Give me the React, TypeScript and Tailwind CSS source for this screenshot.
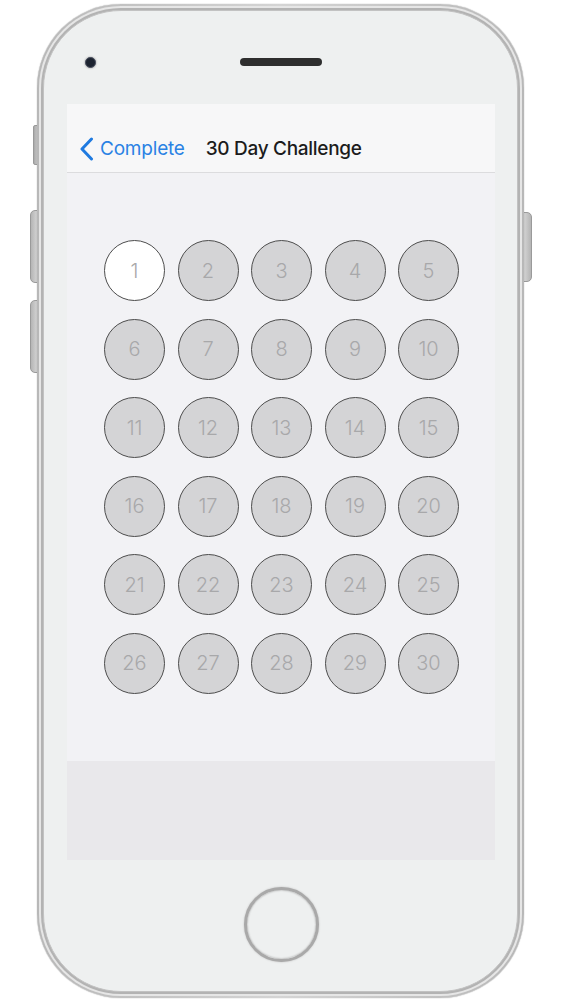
import React from "react";

const days = Array.from({ length: 30 }, (_, i) => i + 1);

export default function App() {
  return (
    <div className="w-[563px] h-[1000px] bg-white relative overflow-hidden" style={{ fontFamily: "Inter, 'Noto Sans', sans-serif" }}>
      {/* side buttons */}
      <div className="absolute left-[33px] top-[125px] w-[6px] h-[40px] rounded-l-[2px] bg-gradient-to-r from-[#a9a9a9] to-[#cfcfcf] border border-[#9a9a9a]" />
      <div className="absolute left-[30px] top-[210px] w-[9px] h-[73px] rounded-l-[5px] bg-gradient-to-r from-[#b5b5b5] to-[#d8d8d8] border border-[#9a9a9a]" />
      <div className="absolute left-[30px] top-[300px] w-[9px] h-[73px] rounded-l-[5px] bg-gradient-to-r from-[#b5b5b5] to-[#d8d8d8] border border-[#9a9a9a]" />
      <div className="absolute left-[522px] top-[212px] w-[10px] h-[70px] rounded-r-[5px] bg-gradient-to-l from-[#b5b5b5] to-[#d8d8d8] border border-[#9a9a9a]" />

      <div className="pl-[37px] pt-[4px] relative">
        {/* phone outer frame */}
        <div className="w-[487px] h-[994px] rounded-[84px] bg-gradient-to-r from-[#b8b8b8] via-[#d4d4d4] to-[#b8b8b8] p-[2px] shadow-[0_0_1px_#888]">
          <div className="w-full h-full rounded-[82px] bg-[#e6e6e6] p-[2px]">
            <div className="w-full h-full rounded-[80px] bg-[#b3b3b3] p-[2px]">
              <div className="w-full h-full rounded-[78px] bg-[#eef0f0] border border-[#c2c2c2] flex flex-col">
                {/* top: camera + speaker */}
                <div className="h-[93px] flex items-center pt-[9px] shrink-0">
                  <div className="ml-[41px] w-[11px] h-[11px] rounded-full bg-[#1c2330] border border-[#4a5060] shadow-[0_0_2px_#888]" />
                  <div className="ml-[144px] w-[82px] h-[8px] rounded-full bg-[#2e2e2e]" />
                </div>
                {/* screen */}
                <div className="ml-[23px] w-[428px] h-[756px] flex flex-col shrink-0">
                  <div className="h-[69px] bg-[#f7f7f8] border-b border-[#dcdcde] flex items-center pt-[22px] shrink-0">
                    <svg width="16" height="24" viewBox="0 0 16 24" className="ml-[12px]">
                      <path d="M12.5 2 L3 12 L12.5 22" fill="none" stroke="#1f7ae0" strokeWidth="3" strokeLinecap="round" strokeLinejoin="round" />
                    </svg>
                    <span className="ml-[5px] text-[19px] text-[#2a82e4] tracking-[-0.2px]">Complete</span>
                    <span className="ml-[21px] text-[19px] font-medium text-[#1c1c1c] tracking-[-0.3px]">30 Day Challenge</span>
                  </div>
                  <div className="h-[588px] bg-[#f2f2f5] pt-[67px] pl-[37px] shrink-0">
                    <div className="grid grid-cols-[repeat(5,61px)] gap-x-[12.5px] gap-y-[17.6px]">
                      {days.map((d) => (
                        <div
                          key={d}
                          className={
                            d === 1
                              ? "w-[61px] h-[61px] rounded-full bg-white border border-[#4d4d4d] flex items-center justify-center text-[20px] font-light text-[#a8a8aa]"
                              : "w-[61px] h-[61px] rounded-full bg-[#d4d4d6] border border-[#4d4d4d] flex items-center justify-center text-[20px] font-light text-[#a8a8aa]"
                          }
                        >
                          {d}
                        </div>
                      ))}
                    </div>
                  </div>
                  <div className="flex-1 bg-[#e9e8eb]" />
                </div>
                {/* home button */}
                <div className="flex justify-center pt-[27px] pl-[2px]">
                  <div className="w-[75px] h-[75px] rounded-full border-[3px] border-[#a9a9a9] bg-[#eef0f0] shadow-[inset_0_0_2px_#999,0_0_2px_#bbb]" />
                </div>
              </div>
            </div>
          </div>
        </div>
      </div>
    </div>
  );
}
